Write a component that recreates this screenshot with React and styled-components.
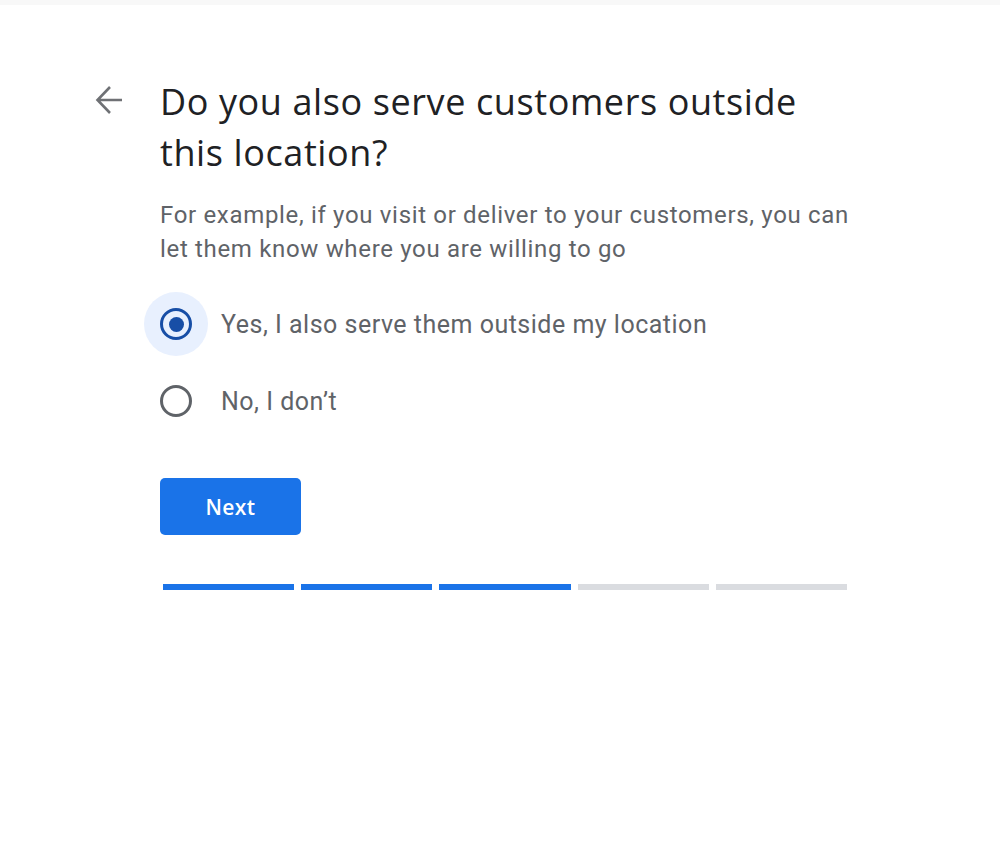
import React, { useState } from "react";
import styled, { createGlobalStyle } from "styled-components";

const Global = createGlobalStyle`
  html, body { margin: 0; padding: 0; background: #fff; }
  body { font-family: Roboto, "Noto Sans", Arial, sans-serif; }
`;

const Page = styled.div`
  width: 1000px;
  height: 858px;
  background: #fff;
  border-top: 5px solid #f8f8f8;
  box-sizing: border-box;
`;

const Layout = styled.div`
  display: grid;
  grid-template-columns: 160px 720px;
  padding-top: 71px;
`;

const BackCell = styled.div`
  display: flex;
  justify-content: flex-end;
  padding-right: 37px;
  padding-top: 9px;
`;

const BackButton = styled.button`
  border: 0;
  background: none;
  padding: 0;
  width: 28px;
  height: 30px;
  display: flex;
  align-items: center;
  justify-content: center;
  cursor: pointer;
`;

const Content = styled.div`
  display: flex;
  flex-direction: column;
`;

const Title = styled.h1`
  margin: 0;
  font-family: "Open Sans", sans-serif;
  font-weight: 400;
  font-size: 36px;
  line-height: 51px;
  color: #202124;
  letter-spacing: 0.6px;
`;

const Desc = styled.p`
  margin: 20px 0 0;
  font-family: Roboto, sans-serif;
  font-size: 24px;
  line-height: 34px;
  color: #5f6368;
  letter-spacing: 0.67px;
  white-space: nowrap;
`;

const Options = styled.div`
  display: flex;
  flex-direction: column;
  gap: 13px;
  margin-top: 26px;
  margin-left: -16px;
`;

const Option = styled.label`
  display: flex;
  align-items: center;
  gap: 13px;
  cursor: pointer;
`;

const Halo = styled.span`
  width: 64px;
  height: 64px;
  border-radius: 50%;
  display: flex;
  align-items: center;
  justify-content: center;
  background: ${(p) => (p.$checked ? "#e8f0fe" : "transparent")};
`;

const Ring = styled.span`
  width: 32px;
  height: 32px;
  box-sizing: border-box;
  border-radius: 50%;
  border: 3.5px solid ${(p) => (p.$checked ? "#174ea6" : "#5f6368")};
  display: flex;
  align-items: center;
  justify-content: center;
`;

const Dot = styled.span`
  width: 15px;
  height: 15px;
  border-radius: 50%;
  background: #174ea6;
`;

const OptionText = styled.span`
  font-family: Roboto, sans-serif;
  font-size: 25px;
  letter-spacing: 0.5px;
  color: #5f6368;
`;

const NextButton = styled.button`
  margin-top: 45px;
  width: 141px;
  height: 57px;
  border: 0;
  border-radius: 5px;
  background: #1a73e8;
  color: #fff;
  font-family: "Open Sans", sans-serif;
  font-weight: 600;
  font-size: 21px;
  letter-spacing: 0.4px;
  cursor: pointer;
`;

const Progress = styled.div`
  margin-top: 49px;
  margin-left: 3px;
  width: 684px;
  display: grid;
  grid-template-columns: repeat(5, 1fr);
  gap: 7px;
`;

const Segment = styled.div`
  height: 6px;
  background: ${(p) => (p.$done ? "#1a73e8" : "#dadce0")};
`;

export default function App() {
  const [value, setValue] = useState("yes");
  const opts = [
    { id: "yes", label: "Yes, I also serve them outside my location" },
    { id: "no", label: "No, I don’t" },
  ];
  return (
    <>
      <Global />
      <Page>
        <Layout>
          <BackCell>
            <BackButton aria-label="Back">
              <svg width="28" height="30" viewBox="0 0 28 30" fill="none">
                <path
                  d="M27 15H3M15 2L2.5 15L15 28"
                  stroke="#6f7175"
                  strokeWidth="2.6"
                />
              </svg>
            </BackButton>
          </BackCell>
          <Content>
            <Title>
              Do you also serve customers outside
              <br />
              this location?
            </Title>
            <Desc>
              For example, if you visit or deliver to your customers, you can
              <br />
              let them know where you are willing to go
            </Desc>
            <Options>
              {opts.map((o) => {
                const checked = value === o.id;
                return (
                  <Option key={o.id} onClick={() => setValue(o.id)}>
                    <Halo $checked={checked}>
                      <Ring $checked={checked}>{checked && <Dot />}</Ring>
                    </Halo>
                    <OptionText>{o.label}</OptionText>
                  </Option>
                );
              })}
            </Options>
            <div>
              <NextButton>Next</NextButton>
            </div>
            <Progress>
              {[0, 1, 2, 3, 4].map((i) => (
                <Segment key={i} $done={i < 3} />
              ))}
            </Progress>
          </Content>
        </Layout>
      </Page>
    </>
  );
}
